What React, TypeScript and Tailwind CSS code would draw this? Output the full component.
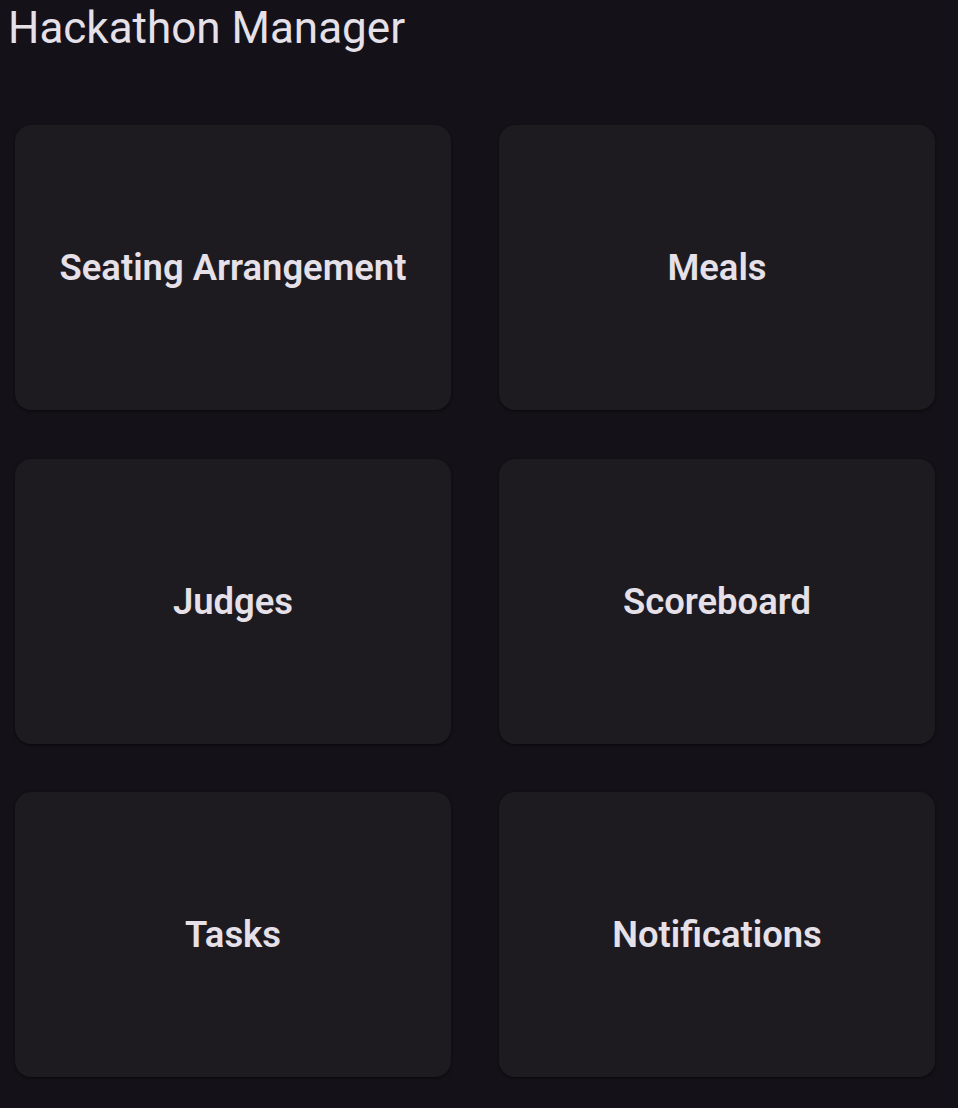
const tiles = [
  "Seating Arrangement",
  "Meals",
  "Judges",
  "Scoreboard",
  "Tasks",
  "Notifications",
];

function Tile({ label }: { label: string }) {
  return (
    <div className="h-[285px] rounded-[16px] bg-[#1d1b20] shadow-[0_1px_3px_rgba(0,0,0,0.35),0_1px_2px_rgba(0,0,0,0.25)] flex items-center justify-center cursor-pointer">
      <span className="text-[36.4px] font-semibold text-[#e6e0e9] pt-[2px]">
        {label}
      </span>
    </div>
  );
}

export default function App() {
  return (
    <div
      className="min-h-screen bg-[#141218] text-[#e6e0e9]"
      style={{ fontFamily: "Roboto, 'Noto Sans', sans-serif" }}
    >
      <h1 className="pl-2 pt-[2px] text-[44px] leading-[52px] font-normal">
        Hackathon Manager
      </h1>
      <div className="mt-[71px] ml-[15px] grid grid-cols-[436px_436px] gap-x-[48px] gap-y-[48.5px] pb-[31px]">
        {tiles.map((t) => (
          <Tile key={t} label={t} />
        ))}
      </div>
    </div>
  );
}
